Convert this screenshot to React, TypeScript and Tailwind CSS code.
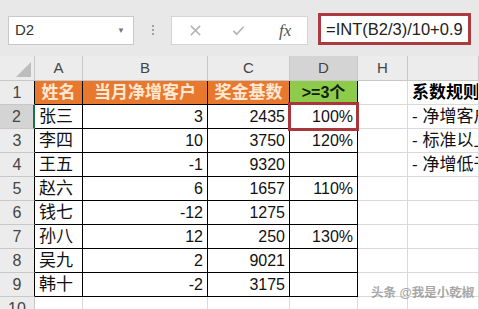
import type { ReactNode } from "react";

const SANS = "font-['Liberation_Sans','Noto_Sans_CJK_SC',sans-serif]";

type Row = {
  n: number;
  name: string;
  inc: string;
  base: string;
  rate: string;
  note: string;
};

const rows: Row[] = [
  { n: 2, name: "张三", inc: "3", base: "2435", rate: "100%", note: "- 净增客户" },
  { n: 3, name: "李四", inc: "10", base: "3750", rate: "120%", note: "- 标准以上" },
  { n: 4, name: "王五", inc: "-1", base: "9320", rate: "", note: "- 净增低于" },
  { n: 5, name: "赵六", inc: "6", base: "1657", rate: "110%", note: "" },
  { n: 6, name: "钱七", inc: "-12", base: "1275", rate: "", note: "" },
  { n: 7, name: "孙八", inc: "12", base: "250", rate: "130%", note: "" },
  { n: 8, name: "吴九", inc: "2", base: "9021", rate: "", note: "" },
  { n: 9, name: "韩十", inc: "-2", base: "3175", rate: "", note: "" },
];

function Cell({ className = "", children }: { className?: string; children?: ReactNode }) {
  return (
    <div className={`flex h-6 items-center overflow-hidden whitespace-nowrap border-b border-r ${className}`}>
      {children}
    </div>
  );
}

function RowHead({ n, active }: { n: number; active?: boolean }) {
  return (
    <Cell
      className={`justify-center border-b-[#c8c8c8] text-[16px] text-[#444] ${
        active ? "border-r-2 border-r-[#217346] bg-[#d4d4d4]" : "border-r-black bg-[#ececec]"
      }`}
    >
      {n}
    </Cell>
  );
}

export default function App() {
  return (
    <div className={`relative h-[309px] w-[479px] overflow-hidden bg-white ${SANS}`}>
      {/* formula bar */}
      <div className="flex h-[56px] items-start bg-[#e8e8e8]">
        <div className="ml-2 mt-4 flex h-[29px] w-[126px] items-center justify-between border border-[#c8c8c8] bg-white pl-[6px] pr-[8px]">
          <span className="text-[15px] text-[#333]">D2</span>
          <span className="text-[8px] text-[#777]">▼</span>
        </div>
        <div className="ml-[18px] mt-[25px] flex flex-col gap-[2px]">
          <span className="h-[2px] w-[2px] bg-[#a0a0a0]" />
          <span className="h-[2px] w-[2px] bg-[#a0a0a0]" />
          <span className="h-[2px] w-[2px] bg-[#a0a0a0]" />
        </div>
        <div className="ml-[17px] mt-4 flex h-[29px] w-[137px] items-center border border-[#d4d4d4] bg-white">
          <svg viewBox="0 0 14 14" className="ml-[17px] h-[13px] w-[13px]" aria-hidden="true">
            <path d="M2 2 L12 12 M12 2 L2 12" stroke="#b4b4b4" strokeWidth="1.6" fill="none" />
          </svg>
          <svg viewBox="0 0 14 14" className="ml-[30px] h-[13px] w-[13px]" aria-hidden="true">
            <path d="M1.5 7.5 L5 11 L12.5 3" stroke="#b4b4b4" strokeWidth="1.8" fill="none" />
          </svg>
          <span className="ml-[34px] font-['Liberation_Serif',serif] text-[17px] italic text-[#555]">fx</span>
        </div>
        <div className="ml-[10px] mt-[13px] flex h-[32px] w-[153px] items-center border-[3px] border-[#ac3a3e] bg-white pl-[5px]">
          <span className="whitespace-nowrap text-[16.5px] text-[#222]">=INT(B2/3)/10+0.9</span>
        </div>
      </div>

      {/* sheet */}
      <div className="relative grid grid-cols-[35px_48px_125px_82px_68px_50px_71px] border-[#d9d9d9]">
        {/* column headers */}
        <div className="relative h-[25px] border-b border-r border-[#c8c8c8] bg-[#ececec]">
          <div className="absolute bottom-[3px] right-[3px] h-0 w-0 border-b-[15px] border-l-[15px] border-b-[#bdbdbd] border-l-transparent" />
        </div>
        {["A", "B", "C", "D", "H", ""].map((c, i) => (
          <div
            key={i}
            className={`flex h-[25px] items-center justify-center border-b border-r border-[#c8c8c8] text-[15px] text-[#444] ${
              c === "D" ? "bg-[#d4d4d4]" : "bg-[#ececec]"
            }`}
          >
            {c}
          </div>
        ))}

        {/* row 1 */}
        <RowHead n={1} />
        <Cell className="justify-center border-black bg-[#e9782f] text-[17px] font-bold text-[#fde8d4]">姓名</Cell>
        <Cell className="justify-center border-black bg-[#e9782f] text-[17px] font-bold text-[#fde8d4]">当月净增客户</Cell>
        <Cell className="justify-center border-black bg-[#e9782f] text-[17px] font-bold text-[#fde8d4]">奖金基数</Cell>
        <Cell className="justify-center border-black bg-[#8fcb4b] text-[16px] font-bold text-[#102010]">&gt;=3个</Cell>
        <Cell className="border-[#d9d9d9]" />
        <Cell className="border-[#d9d9d9] pl-1 text-[17px] font-bold text-black">系数规则</Cell>

        {rows.map((r) => (
          <div key={r.n} className="contents">
            <RowHead n={r.n} active={r.n === 2} />
            <Cell className="border-black pl-1 text-[17px] text-[#111]">{r.name}</Cell>
            <Cell className="justify-end border-black pr-1 text-[16px] text-[#111]">{r.inc}</Cell>
            <Cell className="justify-end border-black pr-1 text-[16px] text-[#111]">{r.base}</Cell>
            <Cell className="justify-end border-black pr-1 text-[16px] text-[#111]">{r.rate}</Cell>
            <Cell className="border-[#d9d9d9]" />
            <Cell className="border-[#d9d9d9] pl-1 text-[17px] text-[#111]">{r.note}</Cell>
          </div>
        ))}

        {/* row 10 */}
        <Cell className="justify-center border-b-[#c8c8c8] border-r-[#c8c8c8] bg-[#ececec] text-[16px] text-[#444]">10</Cell>
        {[0, 1, 2, 3, 4, 5].map((i) => (
          <Cell key={i} className="border-[#d9d9d9]" />
        ))}

        {/* active cell outline */}
        <div className="absolute left-[288px] top-[46px] h-[29px] w-[71px] border-[3px] border-[#a8363a]" />
      </div>

      {/* watermark */}
      <div className="absolute left-[371px] top-[284px] whitespace-nowrap text-[12.5px] font-bold text-[#8a8a8a] opacity-75">
        头条 @我是小乾椒
      </div>
    </div>
  );
}
